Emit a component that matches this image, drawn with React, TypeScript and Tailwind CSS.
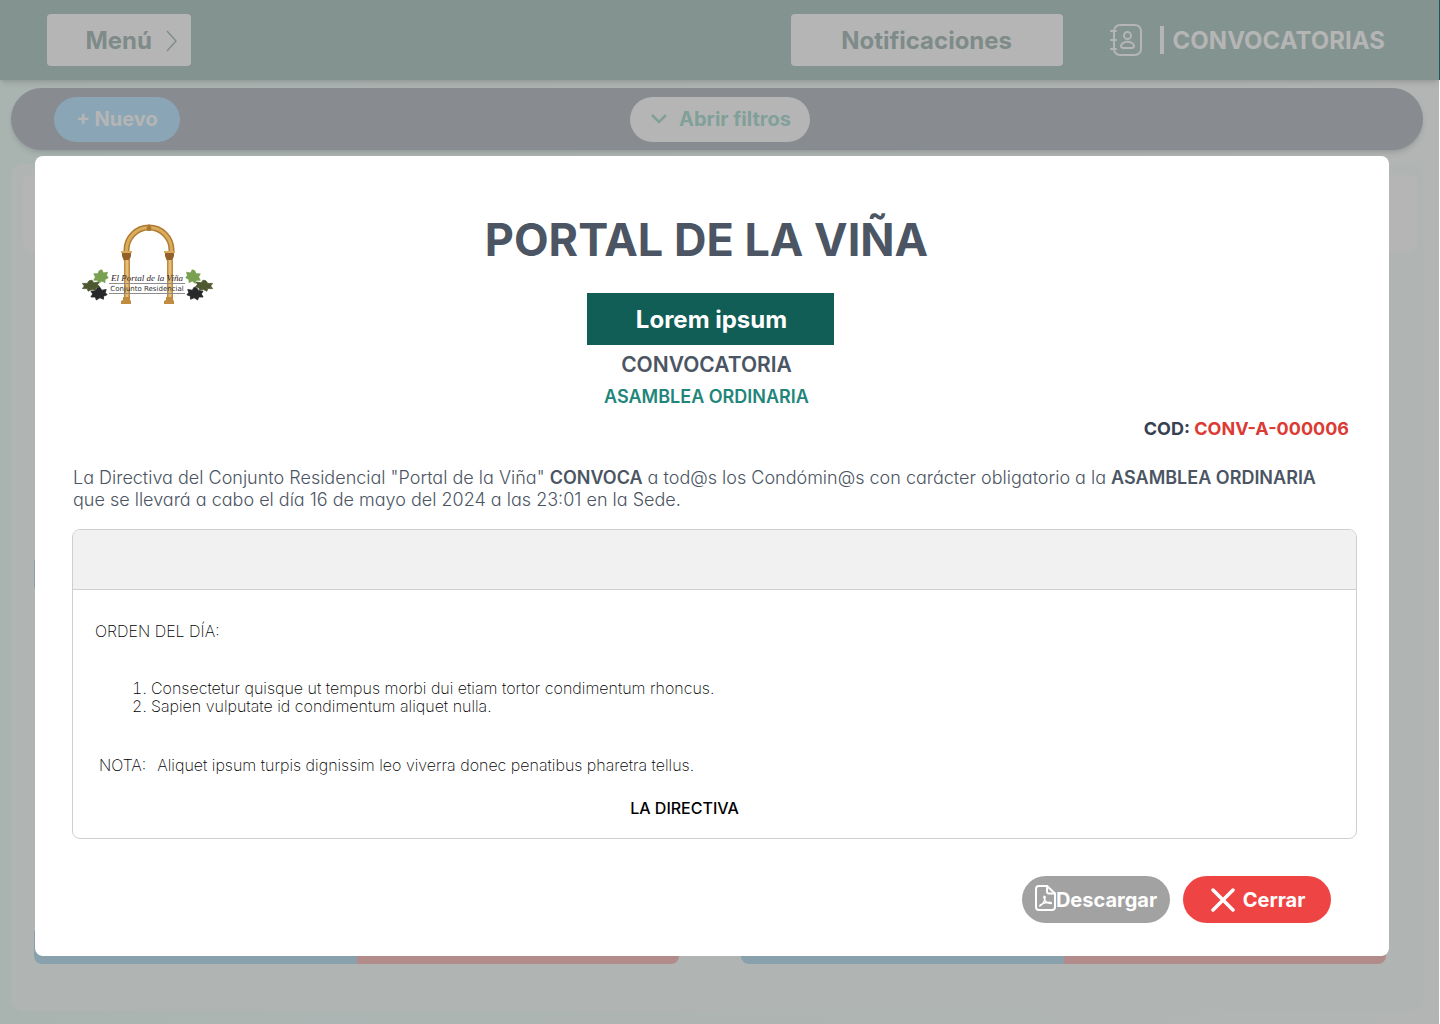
import React from "react";

function AddressBookIcon() {
  return (
    <svg width="32" height="34" viewBox="0 0 32 34" fill="none" stroke="#b5b5b5" strokeWidth="2" strokeLinecap="round" strokeLinejoin="round" aria-hidden="true">
      <rect x="4" y="2" width="27" height="30" rx="6" />
      <path d="M1 8h5M1 17h5M1 26h5" />
      <circle cx="17.500" cy="12.500" r="3.500" />
      <path d="M17.500 18.800c-3.500 0-6.500 2-6.500 4 0 1.500 1.200 2.200 2.500 2.200h8c1.300 0 2.500-.7 2.500-2.200 0-2-3-4-6.500-4z" />
    </svg>
  );
}

function PdfIcon() {
  return (
    <svg width="21" height="28" viewBox="0 0 21 28" fill="none" stroke="#fff" strokeWidth="2" strokeLinecap="round" strokeLinejoin="round" aria-hidden="true" className="-mt-1 shrink-0">
      <path d="M12 2H4a3 3 0 0 0-3 3v18a3 3 0 0 0 3 3h13a3 3 0 0 0 3-3V9.500z" />
      <path d="M12 2v5.500a2 2 0 0 0 2 2h6" />
      <path strokeWidth="1.300" d="M5 22c3-1.500 5.500-6.500 5.200-9-.1-1.300-1.500-1.300-1.400 0 .2 3.500 3.500 6.500 6.700 6.700 1.300 0 1.300-1.300 0-1.400-3-.2-7.500 1-9.800 2.200-1 .7-1.500 1.800-.7 1.500z" />
    </svg>
  );
}

const LEAF = "M1-9 3-5 8-6 7-2 9 1 5 3 5 7 1 5-3 8-4 4-9 4-7 0-9-4-4-4-2-8z";

function PortalLogo() {
  return (
    <svg width="132" height="84" viewBox="0 0 132 84" role="img" aria-label="El Portal de la Viña" className="shrink-0">
      <defs>
        <linearGradient id="stone" x1="0" x2="1">
          <stop offset="0" stopColor="#b47d34" />
          <stop offset=".5" stopColor="#efcb86" />
          <stop offset="1" stopColor="#b47a32" />
        </linearGradient>
      </defs>
      <path d="M44.500 29V26a22.500 22.500 0 0 1 45 0v3" fill="none" stroke="#b07a30" strokeWidth="6" />
      <path d="M44.500 29V26a22.500 22.500 0 0 1 45 0v3" fill="none" stroke="#d9ac5e" strokeWidth="3" />
      <path d="M67 0l2.500 4-1 3h-3l-1-3z" fill="#a8792f" />
      {[44, 87].map((x) => (
        <g key={x}>
          <path d={`M${x - 4} 29h9v3l-2 5h-5l-2-5z`} fill="#93602a" />
          <path d={`M${x - 5} 27h11v2h-11z`} fill="#d7aa5c" />
          <rect x={x - 2} y="36" width="6" height="39" fill="url(#stone)" />
          <path d={`M${x - 3} 73h7v3l1 1v3h-10v-3l2-1z`} fill="#c08c42" />
        </g>
      ))}
      <g strokeLinejoin="round" strokeWidth="1">
        <path d={LEAF} fill="#799f51" stroke="#799f51" transform="translate(19 53) scale(.8)" />
        <path d={LEAF} fill="#4d5830" stroke="#4d5830" transform="translate(9 62) scale(.95 .65)" />
        <path d={LEAF} fill="#272829" stroke="#272829" transform="translate(17 70) scale(.9 .75)" />
        <path d={LEAF} fill="#799f51" stroke="#799f51" transform="translate(111 53) scale(-.8 .8)" />
        <path d={LEAF} fill="#4d5830" stroke="#4d5830" transform="translate(122 62) scale(-.95 .65)" />
        <path d={LEAF} fill="#272829" stroke="#272829" transform="translate(113 70) scale(-.9 .75)" />
      </g>
      <path d="M27 59.500h76M27 69.500h76" stroke="#8d8d8d" strokeWidth="1" />
      <text x="65" y="57" textAnchor="middle" fontSize="9" fontStyle="italic" fontFamily="Liberation Serif, serif" fill="#29251f">El Portal de la Viña</text>
      <text x="65" y="67" textAnchor="middle" fontSize="7" fontFamily="DejaVu Sans, sans-serif" fill="#333">Conjunto Residencial</text>
    </svg>
  );
}

function CardActions() {
  return (
    <div className="grid h-[33px] flex-1 grid-cols-2 overflow-hidden rounded-b-lg">
      <div className="bg-[#88a1ac]" />
      <div className="bg-[#b18c8b]" />
    </div>
  );
}

export default function App() {
  return (
    <div className="relative flex min-h-screen flex-col bg-[#abb4b2] font-['Inter',sans-serif]">
      <header className="z-10 flex h-20 items-center border-r border-[#115e56] bg-[#839390] pr-[54px] pl-[47px] shadow-md">
        <button type="button" className="flex h-[52px] w-36 items-center justify-end rounded bg-[#b5b5b5] pt-px pr-[13px] text-2xl font-bold text-[#7e8b89]">
          Menú
          <svg width="12" height="22" viewBox="0 0 12 22" fill="none" stroke="#7e8b89" strokeWidth="1.300" className="ml-[14px]" aria-hidden="true">
            <path d="M1 1l9 10-9 10" />
          </svg>
        </button>
        <button type="button" className="ml-auto h-[52px] w-[272px] rounded bg-[#b5b5b5] pt-px text-2xl font-bold text-[#7e8b89]">
          Notificaciones
        </button>
        <div className="ml-[47px] flex items-center text-[#b5b5b5]">
          <AddressBookIcon />
          <span className="ml-[18px] h-7 w-1 bg-[#b5b5b5]" />
          <h1 className="ml-[9px] pt-px text-2xl font-bold">CONVOCATORIAS</h1>
        </div>
      </header>

      <main className="flex flex-1 flex-col border-r border-white bg-linear-to-r from-[#a9b4b1] to-[#b2b5b4] pt-2 pr-4 pb-[13px] pl-[11px]">
        <div className="grid h-[62px] grid-cols-[1fr_180px_1fr] items-center rounded-full bg-[#888b90] pr-[37px] pl-[43px] shadow-md">
          <button type="button" className="h-[45px] w-[126px] rounded-full bg-[#8aa6b6] text-xl font-bold text-[#b5b5b5]">+ Nuevo</button>
          <button type="button" className="flex h-[45px] items-center justify-center gap-3 rounded-full bg-[#b5b5b5] pl-0.5 text-xl font-bold text-[#80a099]">
            <svg width="16" height="12" viewBox="0 0 16 12" fill="none" stroke="currentColor" strokeWidth="2.500" aria-hidden="true">
              <path d="M1 2l7 7 7-7" />
            </svg>
            Abrir filtros
          </button>
        </div>
        <section className="mt-[14px] flex flex-1 flex-col rounded-xl bg-[#b0b4b2] pt-[11px] pr-1.5 pb-[47px] pl-3">
          <div className="h-[77px] rounded-lg bg-[#b5b5b5]" />
          <div className="mt-[308px] flex gap-[62px] pr-[31px] pl-[11px]">
            <CardActions />
            <CardActions />
          </div>
          <div className="mt-auto flex gap-[62px] pr-[31px] pl-[11px]">
            <CardActions />
            <CardActions />
          </div>
        </section>
      </main>

      <div role="dialog" aria-modal="true" aria-labelledby="dialog-title" className="absolute top-[156px] right-[51px] left-[35px] z-20 rounded-lg bg-white pr-8 pb-[33px] pl-[37px]">
        <div className="grid grid-cols-[1fr_auto_1fr] pt-14 pr-4">
          <div className="pt-3 pl-2.5">
            <PortalLogo />
          </div>
          <div className="flex flex-col items-center">
            <h2 id="dialog-title" className="text-[45px] leading-[56px] font-bold text-[#4b5563]">PORTAL DE LA VIÑA</h2>
            <p className="mt-[25px] ml-2 flex h-[52px] w-[247px] items-center justify-center bg-[#115e56] pt-px pl-0.5 text-2xl font-bold text-white">Lorem ipsum</p>
            <p className="mt-1 text-[21px] leading-8 font-semibold text-[#4b5563]">CONVOCATORIA</p>
            <p className="text-lg leading-8 font-semibold text-[#22857a]">ASAMBLEA ORDINARIA</p>
          </div>
        </div>
        <p className="mt-1 pr-2 text-right text-lg leading-6 font-bold text-[#374151]">
          COD: <span className="text-[#dc3a35]">CONV-A-000006</span>
        </p>
        <p className="mt-[26px] pr-8 pl-px text-lg leading-[22px] font-light text-[#4b5563] [font-feature-settings:'cv11']">
          La Directiva del Conjunto Residencial "Portal de la Viña" <b className="font-semibold [font-feature-settings:normal]">CONVOCA</b> a tod@s los Condómin@s con carácter obligatorio a la <b className="font-semibold [font-feature-settings:normal]">ASAMBLEA ORDINARIA</b> que se llevará a cabo el día 16 de mayo del 2024 a las 23:01 en la Sede.
        </p>

        <section className="mt-[18px] overflow-hidden rounded-lg border border-[#cfcfcf] text-base font-[250] text-black">
          <div className="h-[60px] border-b border-[#cfcfcf] bg-[#f1f1f1]" />
          <div className="px-[22px] pt-8 pb-[21px] leading-[18px]">
            <h3>ORDEN DEL DÍA:</h3>
            <ol className="mt-[39px] list-decimal pl-14">
              <li>Consectetur quisque ut tempus morbi dui etiam tortor condimentum rhoncus.</li>
              <li>Sapien vulputate id condimentum aliquet nulla.</li>
            </ol>
            <p className="mt-[41px] flex gap-[11px] pl-1">
              <span>NOTA:</span>
              <span>Aliquet ipsum turpis dignissim leo viverra donec penatibus pharetra tellus.</span>
            </p>
            <p className="mt-[25px] pr-15 text-center font-medium">LA DIRECTIVA</p>
          </div>
        </section>

        <div className="mt-[37px] flex justify-end gap-[13px] pr-[26px] text-xl font-bold text-white">
          <button type="button" className="flex h-[47px] w-[148px] items-center justify-center rounded-full bg-[#a2a2a2]">
            <PdfIcon />
            Descargar
          </button>
          <button type="button" className="flex h-[47px] w-[148px] items-center justify-center gap-2 rounded-full bg-[#ef4444] pl-0.5">
            <svg width="24" height="24" viewBox="0 0 24 24" stroke="currentColor" strokeWidth="3.500" strokeLinecap="round" aria-hidden="true">
              <path d="M2 2l20 20M22 2L2 22" />
            </svg>
            Cerrar
          </button>
        </div>
      </div>
    </div>
  );
}
